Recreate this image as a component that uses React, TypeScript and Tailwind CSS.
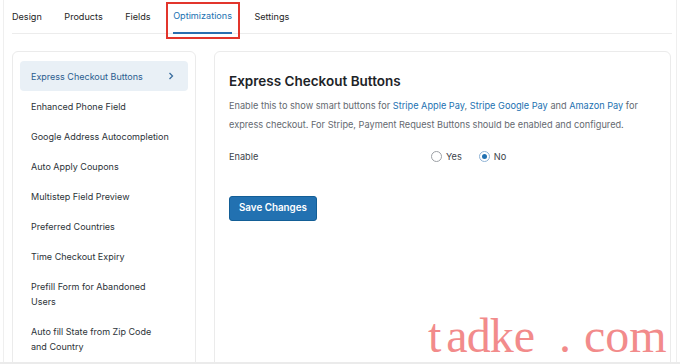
import React from "react";

const items: { label: React.ReactNode; active?: boolean }[] = [
  { label: "Express Checkout Buttons", active: true },
  { label: "Enhanced Phone Field" },
  { label: "Google Address Autocompletion" },
  { label: "Auto Apply Coupons" },
  { label: "Multistep Field Preview" },
  { label: "Preferred Countries" },
  { label: "Time Checkout Expiry" },
  { label: <>Prefill Form for Abandoned<br />Users</> },
  { label: <>Auto fill State from Zip Code<br />and Country</> },
];

const tabs = ["Design", "Products", "Fields", "Optimizations", "Settings"];

export default function App() {
  return (
    <div
      className="relative w-[680px] h-[364px] overflow-hidden bg-white"
      style={{ fontFamily: "Inter, 'Liberation Sans', sans-serif" }}
    >
      <div className="mx-[3px] h-[362px] border-x border-[#efefef] overflow-hidden">
        {/* Tabs */}
        <div className="ml-[8px] mr-[4px] h-[34px] border-b border-[#ececec] flex items-stretch gap-[22.5px] text-[9.1px] text-[#1e1e1e]">
          {tabs.map((t) => (
            <div
              key={t}
              className={
                t === "Optimizations"
                  ? "relative flex items-center border-b-2 border-[#2a6fb0] -mb-px text-[#2271b1]"
                  : "flex items-center"
              }
            >
              {t}
              {t === "Optimizations" && (
                <div className="absolute left-[-7px] right-[-8px] top-[2px] bottom-[-7px] border-2 border-[#e2352c]" />
              )}
            </div>
          ))}
        </div>

        {/* Content */}
        <div className="mt-[17px] ml-[8px] mr-[5px] flex gap-[18px]">
          {/* Sidebar */}
          <div className="w-[184px] h-[340px] shrink-0 rounded-[6px] border border-[#ebebeb] px-[7px] pt-[9px]">
            {items.map((it, i) => (
              <div
                key={i}
                className={
                  it.active
                    ? "flex items-center justify-between rounded-[4px] bg-[#e9f0f6] pl-[11px] pr-[14px] py-[7.5px] text-[9px] leading-[15px] text-[#2b5d8f]"
                    : "flex items-center justify-between pl-[11px] pr-[14px] py-[7.5px] text-[9px] leading-[15px] text-[#2c3338]"
                }
              >
                <span className="whitespace-nowrap">{it.label}</span>
                {it.active && (
                  <svg width="6" height="8" viewBox="0 0 6 8" fill="none">
                    <path d="M1.5 1 L4.5 4 L1.5 7" stroke="#3a6d9e" strokeWidth="1.3" />
                  </svg>
                )}
              </div>
            ))}
          </div>

          {/* Main panel */}
          <div className="flex-1 h-[340px] rounded-[6px] border border-[#ebebeb] pl-[14px] pt-[20px]">
            <div className="text-[13.5px] leading-[18px] font-semibold text-[#1d2327]">
              Express Checkout Buttons
            </div>
            <div className="mt-[6px] text-[9.2px] leading-[19px] text-[#646970] whitespace-nowrap">
              Enable this to show smart buttons for{" "}
              <span className="text-[#2271b1]">Stripe Apple Pay</span>,{" "}
              <span className="text-[#2271b1]">Stripe Google Pay</span> and{" "}
              <span className="text-[#2271b1]">Amazon Pay</span> for
              <br />
              express checkout. For Stripe, Payment Request Buttons should be enabled and configured.
            </div>
            <div className="mt-[15px] h-[16px] flex items-center text-[9.2px] text-[#3c434a]">
              <div className="w-[202px]">Enable</div>
              <div className="flex items-center">
                <span className="w-[11px] h-[11px] rounded-full border border-[#9ca0a5] bg-white" />
                <span className="ml-[4px]">Yes</span>
                <span className="ml-[17px] w-[11px] h-[11px] rounded-full border border-[#8fb3d6] bg-white flex items-center justify-center">
                  <span className="w-[5px] h-[5px] rounded-full bg-[#2271b1]" />
                </span>
                <span className="ml-[4px]">No</span>
              </div>
            </div>
            <button className="mt-[31px] h-[25px] px-[9px] rounded-[3px] border border-[#135e96] bg-[#2271b1] text-white text-[9.8px] font-semibold">
              Save Changes
            </button>
          </div>
        </div>
      </div>
      <div className="h-[2px] bg-[#ebebeb]" />

      {/* Watermark */}
      <div
        className="absolute left-[428px] top-[300px] flex text-[48px] leading-[72px] text-[#f28b8b]"
        style={{ fontFamily: "'Liberation Serif', serif" }}
      >
        <span>t</span>
        <span className="ml-[5px]">a</span>
        <span className="-ml-[1px]">d</span>
        <span className="-ml-[1px]">k</span>
        <span>e</span>
        <span className="ml-[24px]">.</span>
        <span className="ml-[13px]">c</span>
        <span>o</span>
        <span>m</span>
      </div>
    </div>
  );
}
